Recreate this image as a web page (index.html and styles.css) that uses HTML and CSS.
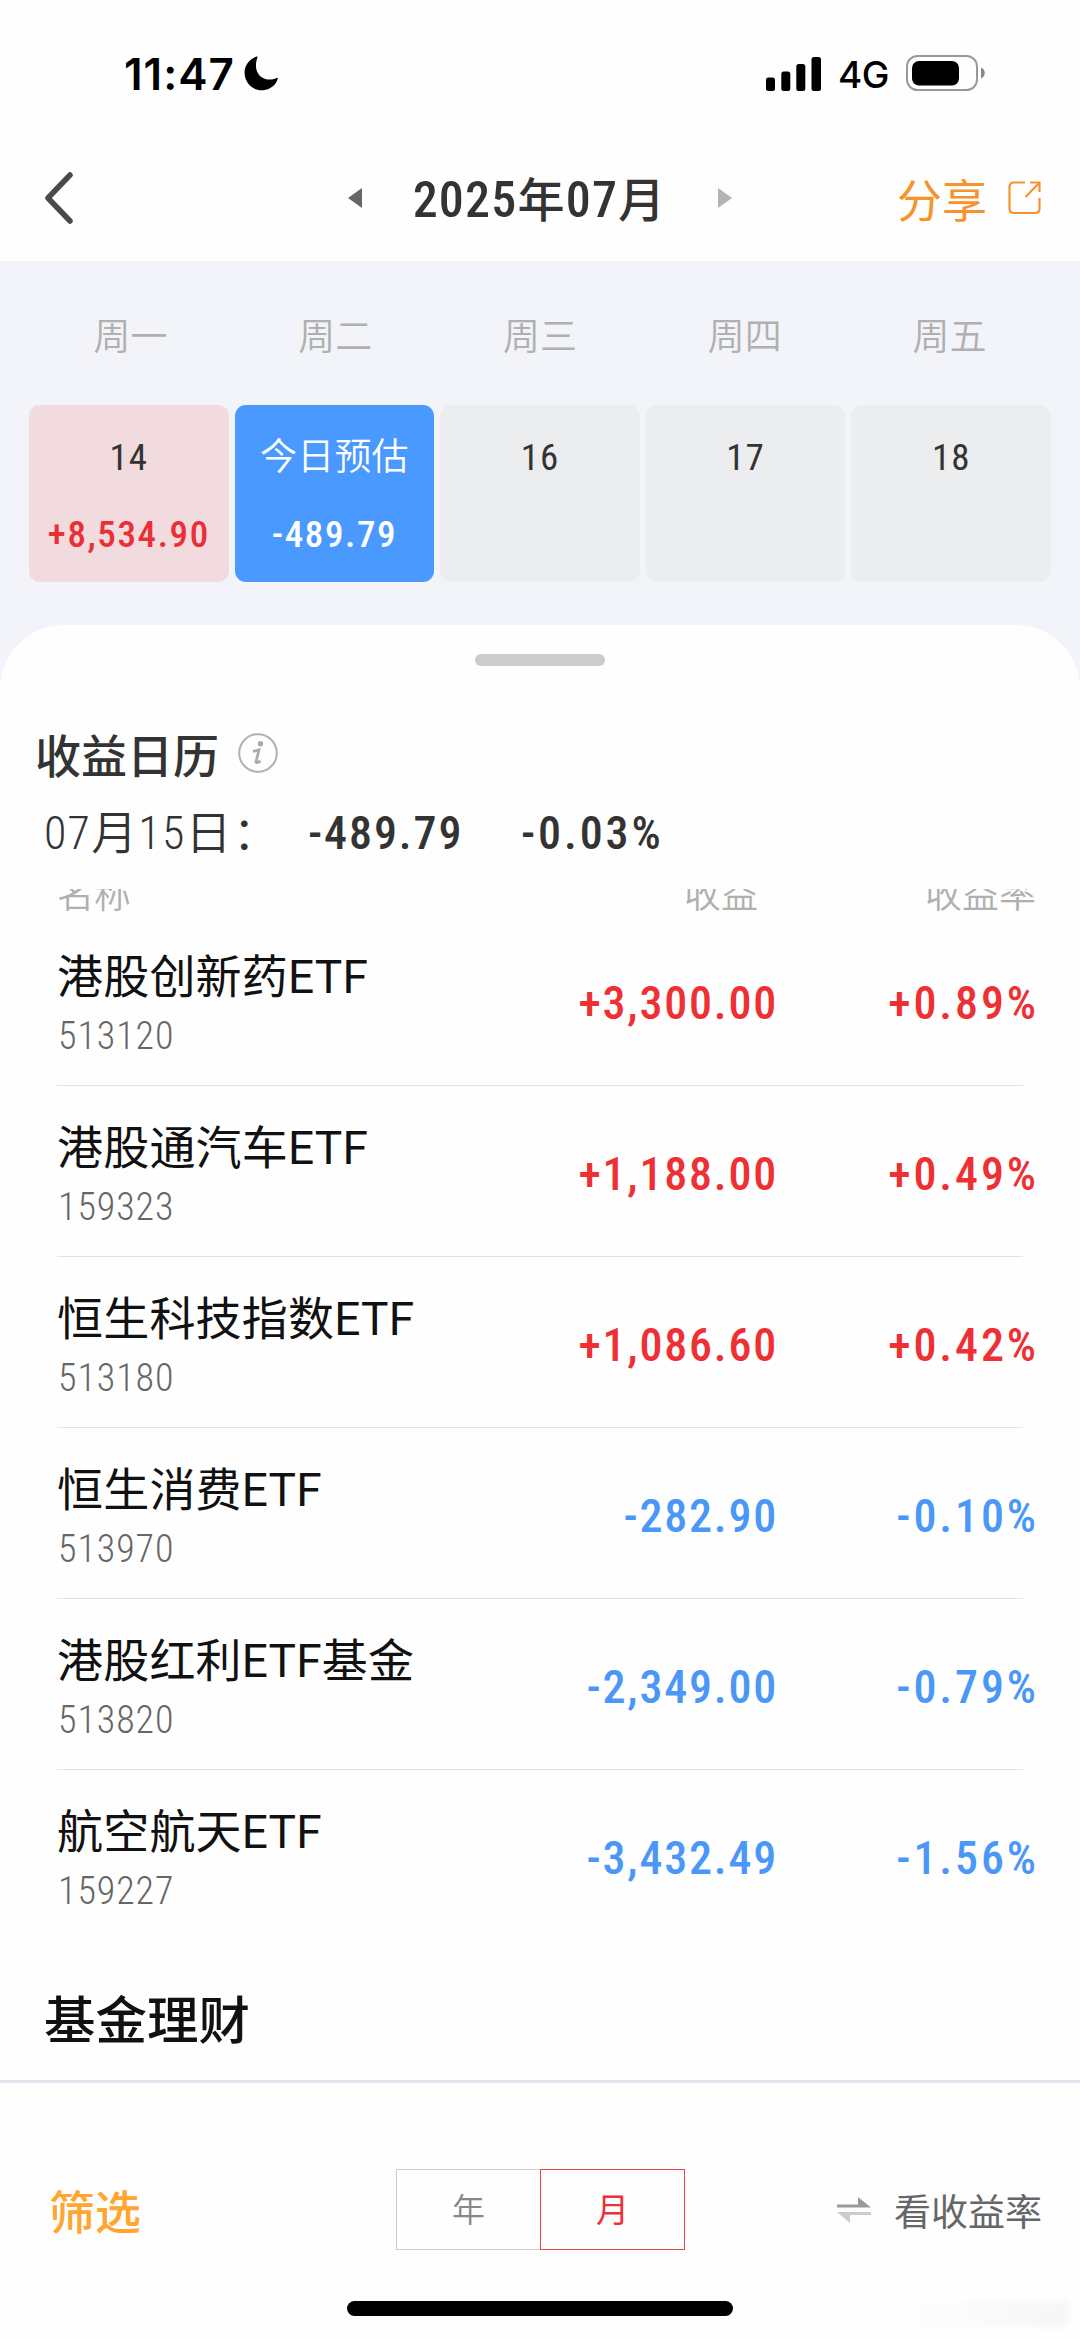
FILE: index.html
```
<!DOCTYPE html>
<html lang="zh-CN">
<head>
  <meta charset="UTF-8" />
  <title>收益日历</title>
  <meta name="viewport" content="width=device-width, initial-scale=1.0" />
  <link rel="stylesheet" href="styles.css">
</head>
<body>
  <div class="screen">

    <!-- Status bar -->
    <div class="status-bar">
      <span class="time">11:47</span>
      <svg class="moon" viewBox="0 0 36 36"><path d="M13 0.5C3 4 -1.500 13.500 1.500 23C4.500 32 13 36.500 21 35C28.500 33.500 33 29 34.700 23.300C34.900 22.500 34.300 22.200 33.500 22.600C27 25.800 18.500 24.500 14.500 18C11.300 12.800 12 7 13.800 1.500C14.100 0.600 13.700 0.200 13 0.500Z"/></svg>
      <div class="status-right">
        <svg class="signal" viewBox="0 0 55 34"><rect x="0" y="20.500" width="9" height="13.500" rx="2.500"/><rect x="15.300" y="14.500" width="9" height="19.500" rx="2.500"/><rect x="30.300" y="7" width="9" height="27" rx="2.500"/><rect x="45.500" y="0" width="9.500" height="34" rx="2.500"/></svg>
        <span class="network">4G</span>
        <svg class="battery" viewBox="0 0 80 36"><rect x="1" y="1" width="70" height="34" rx="10.500" fill="none" stroke="#999" stroke-width="2"/><rect x="6" y="6" width="47" height="24.500" rx="7"/><path d="M75 12.500C80 14.500 80 21.500 75 23.500Z" fill="#888"/></svg>
      </div>
    </div>

    <!-- Nav bar -->
    <div class="nav-bar">
      <svg class="back" viewBox="0 0 28 52"><path d="M25 3L3 26L25 49" fill="none" stroke="#4a4a4a" stroke-width="5.500" stroke-linecap="round" stroke-linejoin="round"/></svg>
      <div class="month-picker">
        <span class="prev"></span>
        <h1>2025<b>年</b>07<b>月</b></h1>
        <span class="next"></span>
      </div>
      <div class="share">
        分享
        <svg viewBox="0 0 34 34"><path d="M17 1.500H6Q1.500 1.500 1.500 6V27.500Q1.500 32 6 32H27Q31.500 32 31.500 27.500V17M22 1.500H31.500V11M31.500 1.500L17.500 16" fill="none" stroke="#f6932a" stroke-width="2.200"/></svg>
      </div>
    </div>

    <!-- Calendar -->
    <div class="calendar">
      <div class="weekdays">
        <span>周一</span><span>周二</span><span>周三</span><span>周四</span><span>周五</span>
      </div>
      <div class="days">
        <div class="day gain"><span>14</span><strong>+8,534.90</strong></div>
        <div class="day today"><span>今日预估</span><strong>-489.79</strong></div>
        <div class="day"><span>16</span></div>
        <div class="day"><span>17</span></div>
        <div class="day"><span>18</span></div>
      </div>
    </div>

    <!-- Bottom sheet -->
    <div class="sheet">
      <div class="handle"></div>
      <div class="sheet-title">
        <h2>收益日历</h2>
        <svg class="info" viewBox="0 0 40 40"><circle cx="20" cy="20" r="18.800" fill="none" stroke="#b0b0b0" stroke-width="2"/><circle cx="22.500" cy="10.700" r="2.700" fill="#aaa"/><path d="M15 18.500L21 17L18 28.500Q17.700 31 22.500 28" fill="none" stroke="#aaa" stroke-width="2.800"/></svg>
      </div>
      <div class="summary">
        <span class="date">07<i>月</i>15<i>日：</i></span>
        <strong class="sum">-489.79</strong>
        <strong class="percent">-0.03%</strong>
      </div>

      <div class="list">
        <div class="list-head"><span>名称</span><span class="amount">收益</span><span class="rate">收益率</span></div>
        <div class="row up">
          <div class="fund"><span class="name">港股创新药ETF</span><span class="code">513120</span></div>
          <span class="amount">+3,300.00</span><span class="rate">+0.89%</span>
        </div>
        <div class="row up">
          <div class="fund"><span class="name">港股通汽车ETF</span><span class="code">159323</span></div>
          <span class="amount">+1,188.00</span><span class="rate">+0.49%</span>
        </div>
        <div class="row up">
          <div class="fund"><span class="name">恒生科技指数ETF</span><span class="code">513180</span></div>
          <span class="amount">+1,086.60</span><span class="rate">+0.42%</span>
        </div>
        <div class="row down">
          <div class="fund"><span class="name">恒生消费ETF</span><span class="code">513970</span></div>
          <span class="amount">-282.90</span><span class="rate">-0.10%</span>
        </div>
        <div class="row down">
          <div class="fund"><span class="name">港股红利ETF基金</span><span class="code">513820</span></div>
          <span class="amount">-2,349.00</span><span class="rate">-0.79%</span>
        </div>
        <div class="row down">
          <div class="fund"><span class="name">航空航天ETF</span><span class="code">159227</span></div>
          <span class="amount">-3,432.49</span><span class="rate">-1.56%</span>
        </div>
        <h3>基金理财</h3>
      </div>
    </div>

    <!-- Toolbar -->
    <div class="toolbar">
      <span class="filter">筛选</span>
      <div class="tabs">
        <span class="tab">年</span><span class="tab active">月</span>
      </div>
      <div class="switch">
        <svg viewBox="0 0 34 26"><path d="M0 7.500H21V0L34 10.500H0Z" fill="#9a9a9a"/><path d="M34 18H13V26L0 15H34Z" fill="#ccc"/></svg>
        看收益率
      </div>
    </div>
    <div class="home-indicator"></div>
    <div class="smudge"></div>
  </div>
</body>
</html>
```
FILE: styles.css
```
* {
  box-sizing: border-box;
}

body {
  margin: 0;
  background: #fefefe;
  font-family: Roboto, "Noto Sans CJK SC", sans-serif;
  color: #333;
}

h1, h2, h3 {
  margin: 0;
  font-weight: 500;
}

svg {
  display: block;
  flex-shrink: 0;
}

.screen {
  position: relative;
  width: 1080px;
  height: 2339px;
  display: flex;
  flex-direction: column;
  overflow: hidden;
}

/* Status bar */
.status-bar {
  height: 140px;
  padding: 7px 94px 0 124px;
  display: flex;
  align-items: center;
  font-family: Inter, sans-serif;
  color: #000;
}

.time {
  width: 120px;
  font-size: 44px;
  font-weight: 600;
  letter-spacing: 1px;
}

.moon {
  width: 35px;
  height: 35px;
}

.status-right {
  margin-left: auto;
  display: flex;
  align-items: center;
}

.signal {
  width: 55px;
  height: 34px;
}

.network {
  width: 85px;
  padding: 1px 0 0 17px;
  font-size: 37px;
  font-weight: 500;
  letter-spacing: -0.5px;
}

.battery {
  width: 80px;
  height: 36px;
  margin-top: -2px;
}

/* Nav bar */
.nav-bar {
  height: 121px;
  padding: 0 38px 0 45px;
  display: flex;
  justify-content: space-between;
  align-items: center;
}

.back {
  width: 28px;
  height: 52px;
  margin-top: -5px;
}

.month-picker {
  width: 384px;
  margin-left: 111px;
  display: flex;
  justify-content: space-between;
  align-items: center;
}

.month-picker h1 {
  font-size: 50px;
  line-height: 60px;
  font-stretch: 85%;
  letter-spacing: 1.200px;
  margin-left: -2px;
}

.month-picker b {
  font-size: 47px;
  font-weight: 500;
}

.prev, .next {
  border-top: 10px solid transparent;
  border-bottom: 10px solid transparent;
  margin-top: -6px;
}

.prev {
  border-right: 14px solid #666;
}

.next {
  border-left: 14px solid #b3b3b3;
}

.share {
  display: flex;
  align-items: center;
  gap: 21px;
  margin-top: -4px;
  font-size: 45px;
  color: #f6932a;
}

.share svg {
  width: 34px;
  height: 34px;
  margin-top: -2px;
}

/* Calendar */
.calendar {
  height: 364px;
  padding: 50px 28px 0;
  background: #f2f4fa;
}

.weekdays {
  display: grid;
  grid-template-columns: repeat(5, 1fr);
  height: 94px;
  line-height: 54px;
  text-align: center;
  font-size: 37px;
  font-weight: 350;
  color: #b0b0b0;
}

.days {
  display: grid;
  grid-template-columns: repeat(5, 1fr);
  gap: 6px;
  margin: 0 1px;
}

.day {
  height: 177px;
  padding-top: 28px;
  border-radius: 11px;
  background: #ebedef;
  display: flex;
  flex-direction: column;
  align-items: center;
  gap: 27px;
  font-size: 37px;
  line-height: 50px;
  font-stretch: 85%;
  letter-spacing: 1px;
}

.day strong {
  font-weight: 500;
  letter-spacing: 1.600px;
}

.day.gain {
  background: #f1dbdf;
}

.day.gain strong {
  color: #eb2f36;
}

.day.today {
  background: #4a99ff;
  color: #fff;
}

.day.today span {
  font-weight: 350;
  letter-spacing: 0.2px;
}

/* Bottom sheet */
.sheet {
  flex: 1;
  min-height: 0;
  background: linear-gradient(#f2f4fa 80px, #fefefe 80px);
}

.handle {
  height: 80px;
  border-radius: 64px 64px 0 0;
  background: #fefefe;
}

.handle::before {
  content: "";
  display: block;
  width: 130px;
  height: 12px;
  margin: 0 auto;
  border-radius: 6px;
  background: #ccc;
  transform: translateY(29px);
}

.sheet-title {
  height: 100px;
  padding: 0 35px;
  display: flex;
  align-items: center;
  gap: 19px;
}

.sheet-title h2 {
  font-size: 46px;
  margin-top: -4px;
}

.info {
  width: 40px;
  height: 40px;
  margin-top: -4px;
}

.summary {
  height: 84px;
  padding-left: 44px;
  line-height: 57px;
  display: flex;
  font-size: 46px;
  font-stretch: 85%;
  letter-spacing: 1.900px;
}

.summary .date {
  width: 264px;
  font-weight: 350;
  letter-spacing: 1.200px;
  white-space: nowrap;
}

.summary i {
  font-style: normal;
}

.summary strong {
  font-weight: 500;
}

.summary .sum {
  width: 213px;
}

.summary .percent {
  letter-spacing: 2.900px;
}

/* Fund list, scrolled under the summary */
.list {
  height: 1191px;
  padding: 0 44px 0 57px;
  overflow: hidden;
}

.list-head {
  display: flex;
  height: 46px;
  margin-top: -20px;
  line-height: 54px;
  font-size: 37px;
  font-weight: 350;
  color: #b0b0b0;
}

.list-head span:first-child {
  flex: 1;
}

.list-head .amount {
  padding-right: 20px;
}

.row {
  position: relative;
  height: 171px;
  padding-top: 31px;
  display: flex;
}

/* divider */
.row:not(:nth-of-type(7))::after {
  content: "";
  position: absolute;
  left: 0;
  right: 13px;
  bottom: 0;
  height: 1px;
  background: #e2e2e2;
}

.fund {
  flex: 1;
  display: flex;
  flex-direction: column;
}

.name {
  font-size: 46px;
  line-height: 62px;
  letter-spacing: 0.2px;
  color: #111;
}

.code {
  padding-left: 1px;
  font-size: 38px;
  line-height: 56px;
  font-weight: 300;
  font-stretch: 85%;
  letter-spacing: 0.9px;
  color: #666;
}

.amount {
  width: 240px;
  text-align: right;
}

.rate {
  width: 258px;
  text-align: right;
}

.row .amount, .row .rate {
  font-size: 46px;
  line-height: 114px;
  font-weight: 500;
  font-stretch: 85%;
}

.row .amount {
  letter-spacing: 1.800px;
}

.row .rate {
  letter-spacing: 2.900px;
  margin-right: -3px;
  width: 261px;
}

.up {
  color: #ee2f33;
}

.down {
  color: #4a97f8;
}

.list h3 {
  margin: 45px 0 0 -13px;
  font-size: 51.5px;
  line-height: 72px;
  color: #111;
}

/* Toolbar */
.toolbar {
  height: 221px;
  padding: 34px 38px 0 49px;
  border-top: 3px solid #e4e4ee;
  display: flex;
  justify-content: space-between;
  align-items: flex-start;
  line-height: 193px;
}

.filter {
  width: 347px;
  font-size: 46px;
  font-weight: 500;
  color: #ffa530;
}

.tabs {
  width: 289px;
  height: 81px;
  margin-top: 52px;
  display: flex;
}

.tab {
  flex: 1;
  border: 1px solid #ccc;
  border-right: 0;
  text-align: center;
  font-size: 33px;
  line-height: 82px;
  font-weight: 350;
  color: #888;
}

.tab.active {
  border: 1.500px solid #e8454a;
  font-weight: 400;
  color: #ee2f33;
}

.switch {
  width: 357px;
  display: flex;
  justify-content: flex-end;
  align-items: center;
  gap: 23px;
  font-size: 37px;
  color: #666;
}

.switch svg {
  width: 34px;
  height: 26px;
  margin-top: -7px;
}

.home-indicator {
  width: 386px;
  height: 15px;
  margin: 0 auto 23px;
  border-radius: 8px;
  background: #000;
}

/* faint shade in the bottom corner */
.smudge {
  position: absolute;
  right: 12px;
  bottom: 12px;
  width: 180px;
  height: 26px;
  background: linear-gradient(to right, rgba(0,0,0,0), rgba(0,0,0,0.03));
  filter: blur(3px);
}
```
